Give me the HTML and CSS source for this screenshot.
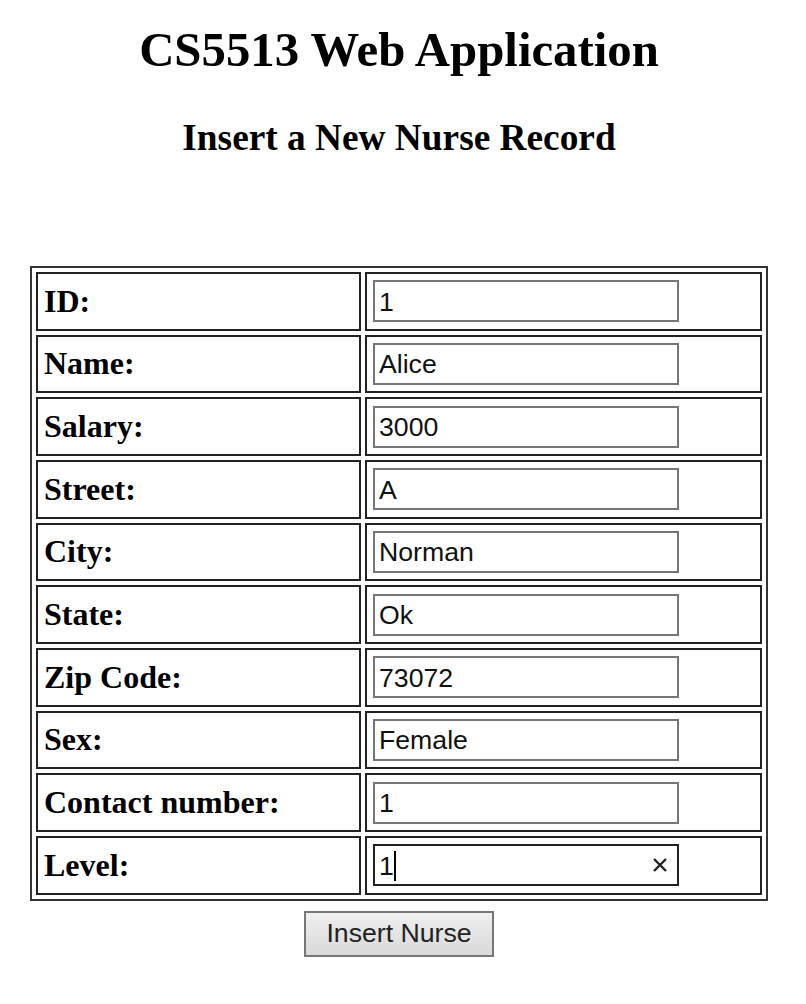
FILE: index.html
```html
<!DOCTYPE html>
<html>
<head>
<meta charset="utf-8">
<title>CS5513 Web Application</title>
<link rel="stylesheet" href="styles.css">
</head>
<body>
<div class="page">
  <h1 class="title">CS5513 Web Application</h1>
  <h2 class="subtitle">Insert a New Nurse Record</h2>
  <form class="form">
    <table class="grid">
      <tr><td class="label">ID:</td><td class="field"><input class="box" type="text" value="1"></td></tr>
      <tr><td class="label">Name:</td><td class="field"><input class="box" type="text" value="Alice"></td></tr>
      <tr><td class="label">Salary:</td><td class="field"><input class="box" type="text" value="3000"></td></tr>
      <tr><td class="label">Street:</td><td class="field"><input class="box" type="text" value="A"></td></tr>
      <tr><td class="label">City:</td><td class="field"><input class="box" type="text" value="Norman"></td></tr>
      <tr><td class="label">State:</td><td class="field"><input class="box" type="text" value="Ok"></td></tr>
      <tr><td class="label">Zip Code:</td><td class="field"><input class="box" type="text" value="73072"></td></tr>
      <tr><td class="label">Sex:</td><td class="field"><input class="box" type="text" value="Female"></td></tr>
      <tr><td class="label">Contact number:</td><td class="field"><input class="box" type="text" value="1"></td></tr>
      <tr><td class="label">Level:</td><td class="field">
        <span class="focus-wrap">
          <input class="box box-focused" type="text" value="1">
          <span class="caret"></span>
          <svg class="clear" width="14" height="14" viewBox="0 0 14 14"><path d="M1 1 L13 13 M13 1 L1 13" stroke="#222" stroke-width="2.4" fill="none"/></svg>
        </span>
      </td></tr>
    </table>
    <div class="actions"><button class="btn" type="button">Insert Nurse</button></div>
  </form>
</div>
</body>
</html>
```
FILE: styles.css
```css
html, body {
  margin: 0;
  padding: 0;
  background: #ffffff;
}
.page {
  width: 798px;
  text-align: center;
  font-family: "Liberation Serif", "Times New Roman", serif;
  color: #000;
}
.title {
  font-size: 48.8px;
  line-height: 56px;
  font-weight: bold;
  margin: 22px 0 0 0;
}
.subtitle {
  font-size: 37.33px;
  line-height: 43px;
  font-weight: bold;
  margin: 38px 0 0 0;
}
.form {
  margin: 107px 0 0 0;
}
.grid {
  width: 738px;
  margin: 0 auto;
  border: 2px solid #333;
  border-spacing: 4px;
  text-align: left;
}
.grid td {
  border: 2px solid #222;
  padding: 6.33px 6px;
  vertical-align: middle;
}
.label {
  width: 325px;
  box-sizing: border-box;
  font-size: 32px;
  font-weight: bold;
  white-space: nowrap;
}
.focus-wrap {
  position: relative;
  display: inline-block;
  vertical-align: middle;
}
.box {
  display: block;
  box-sizing: border-box;
  width: 306px;
  height: 42px;
  margin: 0;
  padding: 3px 4px 1px 4px;
  border: 2px solid #767676;
  border-radius: 0;
  font-family: "Liberation Sans", Arial, sans-serif;
  font-size: 26.67px;
  color: #111;
  background: #fff;
  outline: none;
}
.box-focused {
  border-color: #222;
}
.caret {
  position: absolute;
  left: 21px;
  top: 7px;
  width: 2px;
  height: 30px;
  background: #000;
}
.clear {
  position: absolute;
  left: 280px;
  top: 14px;
}
.actions {
  text-align: center;
  margin-top: 10px;
}
.btn {
  box-sizing: border-box;
  width: 190px;
  height: 46px;
  margin: 0;
  padding: 0;
  border: 2px solid #767676;
  border-radius: 0;
  background: linear-gradient(#efefef, #d9d9d9);
  font-family: "Liberation Sans", Arial, sans-serif;
  font-size: 26.67px;
  color: #222;
}
```
